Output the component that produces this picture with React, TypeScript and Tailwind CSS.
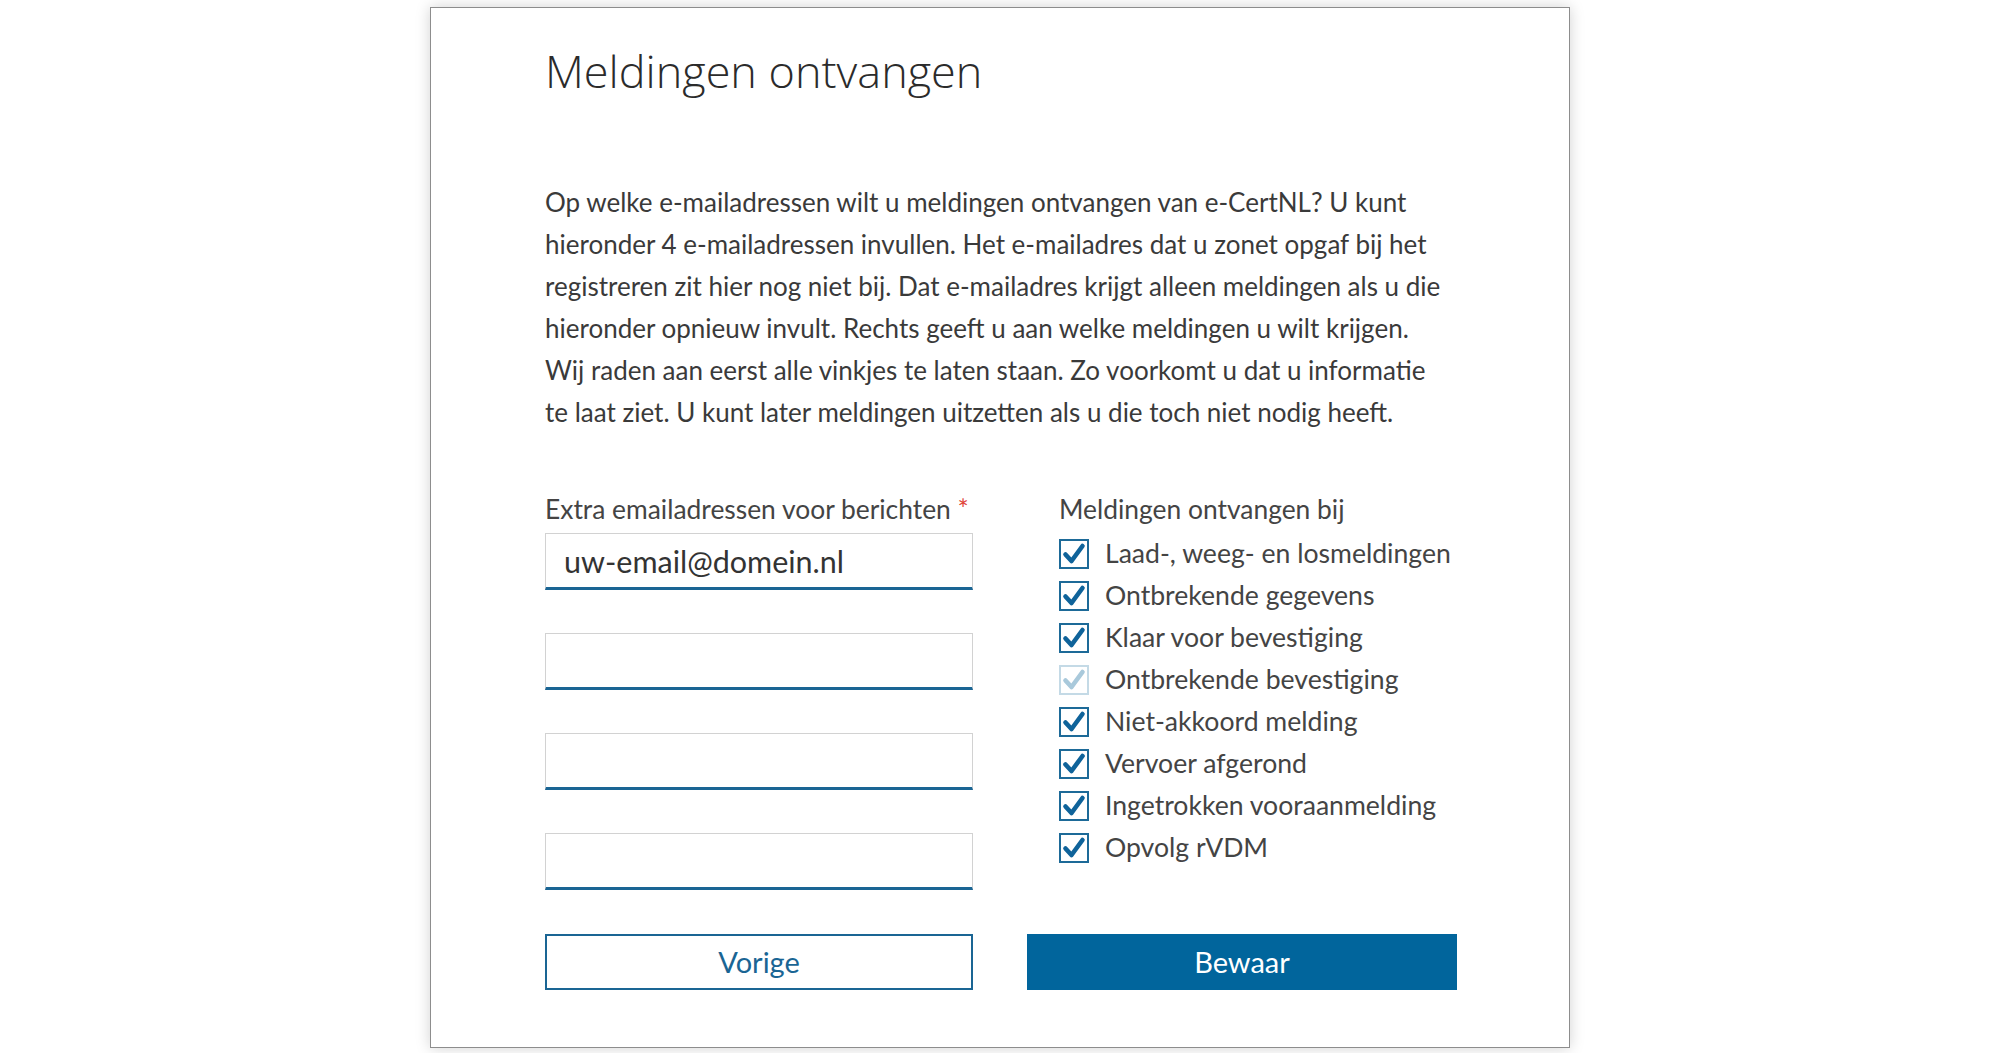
import React from "react";

const meldingen = [
  { label: "Laad-, weeg- en losmeldingen", disabled: false },
  { label: "Ontbrekende gegevens", disabled: false },
  { label: "Klaar voor bevestiging", disabled: false },
  { label: "Ontbrekende bevestiging", disabled: true },
  { label: "Niet-akkoord melding", disabled: false },
  { label: "Vervoer afgerond", disabled: false },
  { label: "Ingetrokken vooraanmelding", disabled: false },
  { label: "Opvolg rVDM", disabled: false },
];

const introLines = [
  "Op welke e-mailadressen wilt u meldingen ontvangen van e-CertNL? U kunt",
  "hieronder 4 e-mailadressen invullen. Het e-mailadres dat u zonet opgaf bij het",
  "registreren zit hier nog niet bij. Dat e-mailadres krijgt alleen meldingen als u die",
  "hieronder opnieuw invult. Rechts geeft u aan welke meldingen u wilt krijgen.",
  "Wij raden aan eerst alle vinkjes te laten staan. Zo voorkomt u dat u informatie",
  "te laat ziet. U kunt later meldingen uitzetten als u die toch niet nodig heeft.",
];

function Vinkje({ disabled }: { disabled: boolean }) {
  return (
    <span
      className={
        disabled
          ? "flex h-[30px] w-[30px] shrink-0 items-center justify-center border-2 border-[#c4dae6] bg-white"
          : "flex h-[30px] w-[30px] shrink-0 items-center justify-center border-2 border-[#1d6a98] bg-white"
      }
    >
      <svg viewBox="0 0 24 24" className="h-[24px] w-[24px]">
        <path
          d="M3.5 12.5 L9.5 19 L20.5 4"
          fill="none"
          stroke={disabled ? "#a9c9db" : "#0f639a"}
          strokeWidth="4.6"
          strokeLinecap="round"
          strokeLinejoin="round"
        />
      </svg>
    </span>
  );
}

function EmailVeld({ value }: { value?: string }) {
  return (
    <input
      type="text"
      defaultValue={value}
      className="h-[57px] w-full border border-[#d2d2d2] border-b-[3px] border-b-[#1a6594] bg-white px-[18px] text-[30.5px] text-[#333] outline-none"
    />
  );
}

export default function App() {
  return (
    <div
      className="flex min-h-[1053px] justify-center bg-white pt-[7px]"
      style={{ fontFamily: "Lato, 'Open Sans', sans-serif" }}
    >
      <div className="h-[1041px] w-[1140px] border border-[#8d8d8d] bg-white px-[114px] pt-[33px] shadow-[0_0_14px_rgba(0,0,0,0.18)]">
        <h1
          className="text-[45px] font-light leading-[60px] text-[#2b2b2b]"
          style={{ fontFamily: "'Open Sans', Lato, sans-serif" }}
        >
          Meldingen ontvangen
        </h1>

        <div className="mt-[80px] text-[26px] leading-[42px] text-[#3a3a3a]">
          {introLines.map((line) => (
            <p key={line} className="whitespace-nowrap">
              {line}
            </p>
          ))}
        </div>

        <div className="mt-[58px] grid grid-cols-[428px_430px] gap-x-[54px]">
          <div>
            <p className="text-[26.4px] leading-[36px] text-[#444]">
              Extra emailadressen voor berichten{" "}
              <span className="text-[#e0443a]">*</span>
            </p>
            <div className="mt-[6px] flex flex-col gap-[43px]">
              <EmailVeld value="uw-email@domein.nl" />
              <EmailVeld />
              <EmailVeld />
              <EmailVeld />
            </div>
          </div>

          <div className="pl-[32px]">
            <p className="text-[26.4px] leading-[36px] text-[#444]">Meldingen ontvangen bij</p>
            <ul className="mt-[6px] flex flex-col">
              {meldingen.map((m) => (
                <li key={m.label} className="flex h-[42px] items-center gap-[16px]">
                  <Vinkje disabled={m.disabled} />
                  <span className="text-[26.6px] text-[#444]">{m.label}</span>
                </li>
              ))}
            </ul>
          </div>
        </div>

        <div className="mt-[44px] grid grid-cols-[428px_430px] gap-x-[54px]">
          <button className="h-[56px] border-2 border-[#1a6594] bg-white text-[29px] text-[#1a6594]">
            Vorige
          </button>
          <button className="h-[56px] bg-[#01659c] text-[29px] text-white">Bewaar</button>
        </div>
      </div>
    </div>
  );
}
